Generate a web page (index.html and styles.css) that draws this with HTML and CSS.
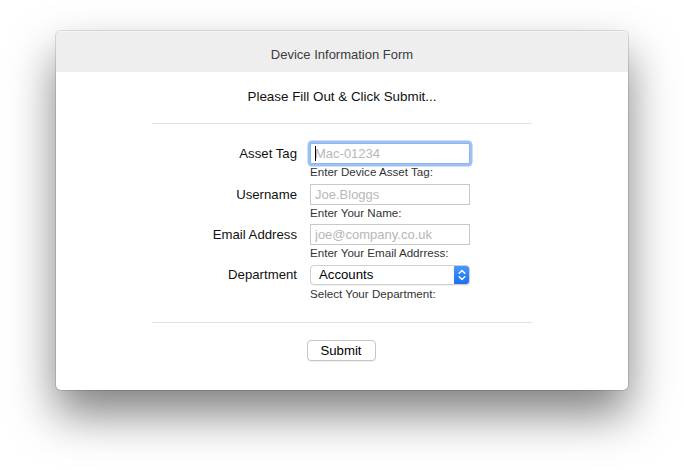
FILE: index.html
```html
<!DOCTYPE html>
<html lang="en">
<head>
<meta charset="utf-8">
<title>Device Information Form</title>
<link rel="stylesheet" href="styles.css">
</head>
<body>
<div class="window">
  <div class="titlebar">Device Information Form</div>
  <div class="content">
    <div class="heading">Please Fill Out &amp; Click Submit...</div>
    <div class="sep"></div>
    <form class="form">
      <label class="label" for="asset">Asset Tag</label>
      <div class="field">
        <span class="input-wrap">
          <input class="input focused" id="asset" placeholder="Mac-01234">
          <span class="caret"></span>
        </span>
        <div class="hint">Enter Device Asset Tag:</div>
      </div>

      <label class="label" for="user">Username</label>
      <div class="field">
        <input class="input" id="user" placeholder="Joe.Bloggs">
        <div class="hint">Enter Your Name:</div>
      </div>

      <label class="label" for="email">Email Address</label>
      <div class="field">
        <input class="input" id="email" placeholder="joe@company.co.uk">
        <div class="hint">Enter Your Email Addrress:</div>
      </div>

      <label class="label label-select" for="dept">Department</label>
      <div class="field">
        <div class="select" id="dept">
          <span class="select-text">Accounts</span>
          <span class="select-arrow">
            <svg width="8" height="12" viewBox="0 0 8 12" fill="none" stroke="#fff" stroke-width="1.4" stroke-linecap="round" stroke-linejoin="round">
              <path d="M1.2 4.2 L4 1.6 L6.8 4.2"/>
              <path d="M1.2 7.8 L4 10.4 L6.8 7.8"/>
            </svg>
          </span>
        </div>
        <div class="hint hint-select">Select Your Department:</div>
      </div>
    </form>
    <div class="sep sep-bottom"></div>
    <div class="actions">
      <button type="button" class="button">Submit</button>
    </div>
  </div>
</div>
</body>
</html>
```

FILE: styles.css
```css
* { box-sizing: border-box; }
html, body {
  margin: 0;
  background: #ffffff;
}
body {
  min-height: 470px;
  padding: 31px 56px 0;
  font-family: "Liberation Sans", Arial, sans-serif;
  color: #000;
}
.window {
  width: 572px;
  height: 359px;
  background: #fff;
  border-radius: 5px;
  overflow: hidden;
  box-shadow: 0 24px 46px rgba(0, 0, 0, 0.5), 0 0 0 1px rgba(0, 0, 0, 0.12);
}
.titlebar {
  height: 41px;
  background: #eeeeee;
  border-top: 1px solid #f6f6f6;
  padding-top: 6px;
  font-size: 13px;
  line-height: 34px;
  text-align: center;
  color: #3c3c3c;
}
.content {
  padding: 17px 96px 0 96px;
}
.heading {
  font-size: 13.4px;
  line-height: 16px;
  text-align: center;
  color: #111;
}
.sep {
  height: 1px;
  background: #e1e1e1;
  margin-top: 18px;
}
.form {
  display: grid;
  grid-template-columns: 145px 160px;
  column-gap: 13px;
  row-gap: 4.5px;
  margin-top: 19px;
}
.label {
  font-size: 13.2px;
  line-height: 21px;
  text-align: right;
  color: #111;
}
.label-select {
  line-height: 20px;
}
.field {
  display: flex;
  flex-direction: column;
}
.input-wrap {
  position: relative;
  display: block;
}
.input {
  display: block;
  width: 160px;
  height: 21px;
  margin: 0;
  padding: 0 4px;
  border: 1px solid #c9c9c9;
  border-radius: 0;
  font-family: inherit;
  font-size: 13px;
  color: #000;
  background: #fff;
  outline: none;
}
.input::placeholder {
  color: #b7b7b7;
}
.input.focused {
  border-color: #8fb6ea;
  box-shadow: 0 0 0 2.5px #9cc1f3;
  border-radius: 2px;
}
.caret {
  position: absolute;
  left: 5px;
  top: 3px;
  width: 1px;
  height: 15px;
  background: #000;
}
.hint {
  font-size: 11.6px;
  line-height: 14px;
  color: #333;
  margin-top: 1px;
}
.select {
  display: flex;
  align-items: center;
  width: 160px;
  height: 20px;
  border: 1px solid #cfcfcf;
  border-radius: 4px;
  background: #fff;
  overflow: hidden;
  box-shadow: 0 1px 0 rgba(0,0,0,0.05);
}
.select-text {
  flex: 1;
  font-size: 13.2px;
  padding-left: 8px;
  line-height: 18px;
  color: #000;
}
.select-arrow {
  width: 16px;
  height: 20px;
  margin: -1px -1px -1px 0;
  background: linear-gradient(#4b9bf7, #1a6ef0);
  display: flex;
  align-items: center;
  justify-content: center;
  border-radius: 0 4px 4px 0;
}
.hint-select { margin-top: 2px; }
.sep-bottom {
  margin-top: 21px;
}
.actions {
  display: flex;
  justify-content: center;
  margin-top: 17px;
}
.button {
  width: 69px;
  height: 21px;
  margin-left: -2px;
  padding: 0;
  border: 1px solid #c6c6c6;
  border-radius: 4px;
  background: #fff;
  font-family: inherit;
  font-size: 13.2px;
  color: #000;
  box-shadow: 0 1px 0 rgba(0,0,0,0.06);
}
```
